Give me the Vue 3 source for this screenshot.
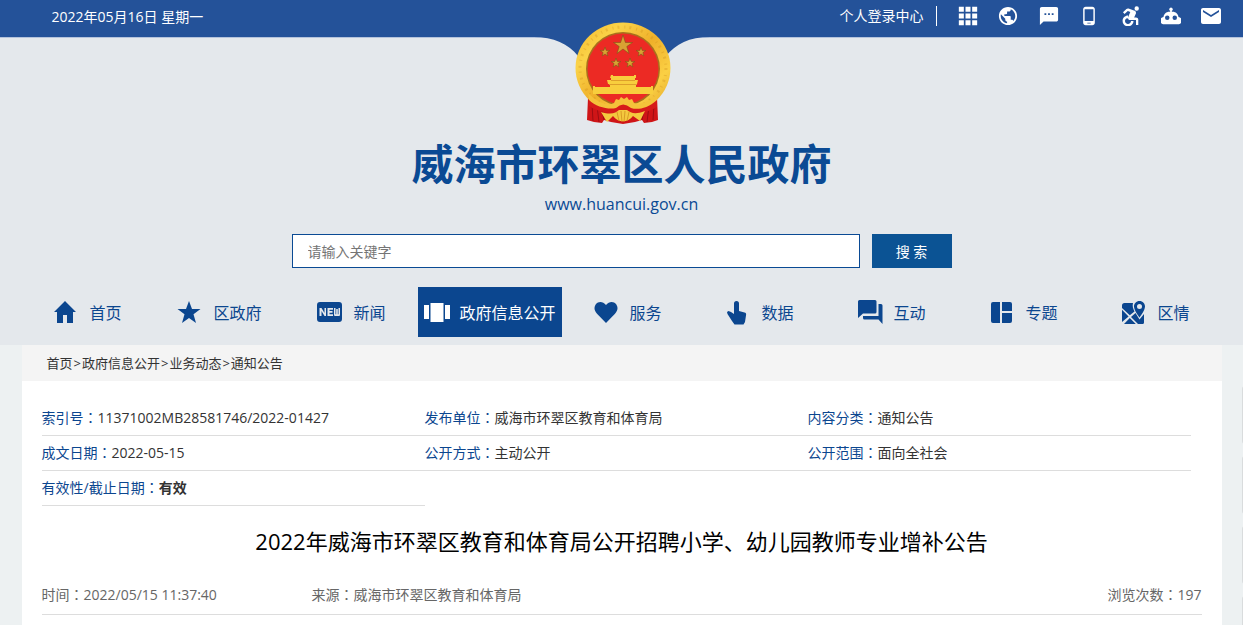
<template>
  <div class="page">
    <header class="site-header">
      <div class="top-bar">
        <div class="wrap top-inner">
          <span class="date">2022年05月16日 星期一</span>
          <a href="#" class="login">个人登录中心</a>
          <div class="top-links">
            <a v-for="item in topLinks" :key="item.name" href="#" :aria-label="item.name">
              <svg :viewBox="item.box || '0 0 24 24'"><path :d="item.path" fill-rule="evenodd" /></svg>
            </a>
          </div>
        </div>
        <svg class="notch" viewBox="0 0 176 30">
          <path d="M0 0C19 0 35 7 44 19L60 30H116L132 19C142 7 155 0 176 0Z" />
        </svg>
        <svg class="emblem" viewBox="0 0 96 104">
          <defs>
            <linearGradient id="gold" x1="0" y1="0" x2="1" y2="1">
              <stop offset="0" stop-color="#f4b62b" />
              <stop offset=".25" stop-color="#fbd348" />
              <stop offset=".5" stop-color="#efb02a" />
              <stop offset=".75" stop-color="#fbd044" />
              <stop offset="1" stop-color="#dfa026" />
            </linearGradient>
          </defs>
          <path d="M13 76L12 98 19 100 27 101 29 98 36 100 48 102 60 100 67 98 69 101 77 100 83 98 82 75Z" fill="#cf1517" />
          <path d="M17 82L18 99M22 84L24 100M74 84L72 100M79 82L78 98M27 88L29 98M69 88L67 98" stroke="#9d0d12" stroke-width="1" />
          <ellipse cx="48" cy="46" rx="47.500" ry="45.500" fill="url(#gold)" />
          <ellipse cx="48" cy="46" rx="43" ry="41" fill="none" stroke="#ca8718" stroke-width="3" stroke-dasharray="2 5 1 4" opacity=".3" />
          <circle cx="48" cy="47" r="37" fill="#a9701c" />
          <circle cx="48" cy="47" r="35.500" fill="#ec2a24" />
          <g fill="#d8a233" stroke="#7d5417" stroke-width=".6">
            <path d="M48 13L50.400 20.500 57.500 20.500 51.800 24.500 54 31.500 48 27 42 31.500 44.200 24.500 38.500 20.500 45.600 20.500Z" />
            <path v-for="star in emblemStars" :key="star" :d="star" />
          </g>
          <path d="M36 53H38V54H59V53H61V56H60V58H63L62 62H61V65H76V64H78V72H18V64H20V65H35V62H33L32 58H36V56H35Z" fill="#f8ce3d" />
          <path d="M36 58.500H60M34 62.500H62" stroke="#dd9f2a" stroke-width="1" />
          <path d="M14 76C25 85 35 87 43 84L48 81 54 84C62 87 73 83 82 75L82 85C72 91 64 92 48 91C34 92 23 90 14 84Z" fill="#d61b1a" />
          <path d="M13 71C24 82 33 84 39 81L41 77 44 78 46 75 49 77 52 75 54 78 57 77 59 81C66 83 75 80 83 71L82 78C72 87 62 88 56 86Q48 79 41 86C34 88 21 85 14 78Z" fill="#f4c23a" />
          <path d="M26 90C36 93 41 91 44 88H52C56 91 60 93 70 89L65 99 58 94C53 101 43 101 38 94L32 100Z" fill="#f4c83e" />
          <path d="M42 90L44 99M46 89L47 100M50 89L49 100M54 90L52 99" stroke="#d18f20" stroke-width=".8" />
        </svg>
      </div>

      <div class="banner">
        <h1>威海市环翠区人民政府</h1>
        <p class="site-url">www.huancui.gov.cn</p>
        <form class="search" @submit.prevent>
          <input v-model="keyword" type="text" placeholder="请输入关键字" aria-label="请输入关键字" />
          <button type="submit">搜 索</button>
        </form>
      </div>

      <nav class="wrap main-nav">
        <div v-for="item in navItems" :key="item.text" class="nav-item">
          <a href="#" :class="{ active: item.active }">
            <svg viewBox="0 0 26 26"><path :d="item.path" fill-rule="evenodd" /></svg>
            <span>{{ item.text }}</span>
          </a>
        </div>
      </nav>
    </header>

    <main class="wrap content">
      <div class="breadcrumb">
        <template v-for="(crumb, index) in crumbs" :key="crumb">
          <span v-if="index">&gt;</span><a href="#">{{ crumb }}</a>
        </template>
      </div>

      <dl class="meta">
        <div v-for="item in meta" :key="item.label">
          <dt>{{ item.label }}<span class="colon">：</span></dt>
          <dd :class="{ strong: item.strong }">{{ item.value }}</dd>
        </div>
      </dl>

      <article>
        <h2>2022年威海市环翠区教育和体育局公开招聘小学、幼儿园教师专业增补公告</h2>
        <div class="info">
          <span class="time">时间<span class="colon">：</span>2022/05/15 11:37:40</span>
          <span>来源<span class="colon">：</span>威海市环翠区教育和体育局</span>
          <span class="views">浏览次数<span class="colon">：</span>197</span>
        </div>
      </article>
    </main>

    <aside class="side-tools">
      <div v-for="n in 4" :key="n"></div>
    </aside>
  </div>
</template>

<script setup>
import { ref } from 'vue';

const keyword = ref('');

const topLinks = [
  { name: '网站群', path: 'M1 1h6v6H1zM9 1h6v6H9zM17 1h6v6h-6zM1 9h6v6H1zM9 9h6v6H9zM17 9h6v6h-6zM1 17h6v6H1zM9 17h6v6H9zM17 17h6v6h-6z' },
  { name: '语言', box: '1 1 22 22', path: 'M12 2C6.480 2 2 6.480 2 12s4.480 10 10 10 10-4.480 10-10S17.520 2 12 2zm-1 17.930c-3.950-.490-7-3.850-7-7.930 0-.620.080-1.210.210-1.790L9 15v1c0 1.100.900 2 2 2v1.930zm6.900-2.540c-.260-.810-1-1.390-1.900-1.390h-1v-3c0-.550-.450-1-1-1H8v-2h2c.550 0 1-.450 1-1V7h2c1.100 0 2-.900 2-2v-.410c2.930 1.190 5 4.060 5 7.410 0 2.080-.800 3.970-2.100 5.390z' },
  { name: '短信', box: '1 1 22 22', path: 'M20 2H4c-1.100 0-1.990.900-1.990 2L2 22l4-4h14c1.100 0 2-.900 2-2V4c0-1.100-.900-2-2-2zM9 11H7V9h2v2zm4 0h-2V9h2v2zm4 0h-2V9h2v2z' },
  { name: '手机版', path: 'M16 1H8C6.340 1 5 2.340 5 4v16c0 1.660 1.340 3 3 3h8c1.660 0 3-1.340 3-3V4c0-1.660-1.340-3-3-3zm-2 20h-4v-1h4v1zm3.250-3H6.750V4h10.500v14z' },
  { name: '无障碍', box: '2 2 20 20', path: 'M16.500 4.500a2.200 2.200 0 1 0 4.400 0a2.200 2.200 0 1 0-4.400 0zM15.500 17H13c0 1.650-1.350 3-3 3s-3-1.350-3-3 1.350-3 3-3v-2.400c-3 0-5.400 2.400-5.400 5.400s2.400 5.400 5.400 5.400 5.500-2.400 5.500-5.400zM18 13.500h-1.860l1.670-3.670C18.420 8.500 17.440 6.600 15.960 6.600L10.500 4.500c-.810-.200-1.540 0-2.100.600L5 8.200l1.500 1.700 3.300-2.800 2.500 1-2.130 5c-.600 1.330.390 2.900 1.850 2.900H18v5h2.300v-5.500c0-1.100-1.200-2-2.300-2z' },
  { name: '智能问答', box: '0 1 24 22', path: 'M11 5.800a2 2 0 1 1 2 0V7h1c3.800 0 6.500 2.700 7 6.200a4.500 4.500 0 0 1 .500 8.800H2.500A4.500 4.500 0 0 1 3 13.200C3.500 9.700 6.200 7 10 7h1zM7.500 11.500a2.700 2.700 0 1 0 0 5.400a2.700 2.700 0 1 0 0-5.400zM16.500 11.500a2.700 2.700 0 1 0 0 5.400a2.700 2.700 0 1 0 0-5.400z' },
  { name: '邮箱', box: '2 2 20 20', path: 'M20 4H4c-1.100 0-2 .900-2 2v12c0 1.100.900 2 2 2h16c1.100 0 2-.900 2-2V6c0-1.100-.900-2-2-2zm0 4l-8 5-8-5V6l8 5 8-5v2z' }
];

const navItems = [
  { text: '首页', path: 'M12 2L1 13h3v11h6v-8h4v8h6V13h3z' },
  { text: '区政府', path: 'M12 2l3 8h8.500l-7 5.300L19 24l-7-5-7 5 2.500-8.700L.5 10H9z' },
  { text: '新闻', path: 'M3 3h19a3 3 0 0 1 3 3v14a3 3 0 0 1-3 3H3a3 3 0 0 1-3-3V6a3 3 0 0 1 3-3zM2.500 9v8h2v-5l3 5H9V9H7.500v5l-3-5zM10.500 9v8H16v-1.800h-3.500v-1.500h3V12h-3v-1.200H16V9zM17 9v6.500c0 1 .500 1.500 1.500 1.500h3c1 0 1.500-.500 1.500-1.500V9h-1.500v6.200h-.700V10H19.200v5.200h-.700V9z' },
  { text: '政府信息公开', active: true, path: 'M0 6h5v14H0zM6.500 4h13v19h-13zM21 6h5v14h-5z' },
  { text: '服务', path: 'M12 24L3 14.800C0 11.500-.200 8 1.800 5.200C4.500 2 9 2.300 12 6c3-3.700 7.500-4 10.200-.800c2 2.800 1.800 6.300-1.200 9.600z' },
  { text: '数据', path: 'M8 4.500a2.500 2.500 0 0 1 5 0V12l5.500 1.500c1.300.400 1.800 1 1.600 2.300L19 23l-1.500 2.500H8.500L6 22 1.500 15l-.500-2 1.500-1L5 13l3 2z' },
  { text: '互动', path: 'M1.500 1H17a1.500 1.500 0 0 1 1.500 1.500V13a1.500 1.500 0 0 1-1.500 1.500H5L0 19V2.500A1.500 1.500 0 0 1 1.500 1zM20.500 5H23a1.500 1.500 0 0 1 1.500 1.500V25l-4-4.500H6.500A1.500 1.500 0 0 1 5 19v-2h15.500z' },
  { text: '专题', path: 'M3 3h7v21H3a2 2 0 0 1-2-2V5a2 2 0 0 1 2-2zM12 3h8a2 2 0 0 1 2 2v7H12zM12 14h10v8a2 2 0 0 1-2 2h-8z' },
  { text: '区情', path: 'M17.500 2c3.300 0 5.500 2.500 5.500 5.500 0 4-5.500 11-5.500 11S12 11.500 12 7.500C12 4.500 14.200 2 17.500 2zm0 3a2.500 2.500 0 1 0 0 5a2.500 2.500 0 1 0 0-5zM2.500 4H11c-.800 3 0 5.500 1.500 8.500L7.800 16.300 0 9V6.500A2.500 2.500 0 0 1 2.500 4zM0 10.800l6.600 6.600L0 23zM2 25l5.800-6 6 6zM13.500 14l4 6.500L22 15v8.500c0 .800-.500 1.500-1.500 1.500h-4.500l-7-7z' }
];

// Малые звёзды герба
const starCenters = [[30, 30], [66, 30], [41, 41], [55, 41]];
const emblemStars = starCenters.map(([x, y]) => {
  const points = [];
  for (let i = 0; i < 10; i++) {
    const r = i % 2 ? 2 : 5;
    const a = (Math.PI * i) / 5 - Math.PI / 2;
    points.push(`${(x + r * Math.cos(a)).toFixed(1)} ${(y + r * Math.sin(a)).toFixed(1)}`);
  }
  return `M${points.join('L')}Z`;
});

const crumbs = ['首页', '政府信息公开', '业务动态', '通知公告'];

const meta = [
  { label: '索引号', value: '11371002MB28581746/2022-01427' },
  { label: '发布单位', value: '威海市环翠区教育和体育局' },
  { label: '内容分类', value: '通知公告' },
  { label: '成文日期', value: '2022-05-15' },
  { label: '公开方式', value: '主动公开' },
  { label: '公开范围', value: '面向全社会' },
  { label: '有效性/截止日期', value: '有效', strong: true }
];
</script>

<style>
body {
  background: #edf1f2;
}
</style>

<style scoped>
.page {
  display: flex;
  flex-direction: column;
  min-height: 100vh;
  font-family: "Open Sans", "Noto Sans CJK SC", sans-serif;
  font-size: 14px;
  color: #333;
}

.page a {
  color: inherit;
  text-decoration: none;
}

.wrap {
  width: 100%;
  max-width: 1200px;
  margin: 0 auto;
}

.site-header {
  background: #e4e8ec;
  padding-bottom: 8px;
}

.top-bar {
  position: relative;
  height: 37px;
  background: #245299;
  border-bottom: 1px solid #b4c3dc;
  color: #fff;
}

.top-inner {
  display: flex;
  align-items: center;
  height: 32px;
}

.date {
  margin-left: 30px;
}

.login {
  margin-left: auto;
  padding-right: 12px;
  line-height: 20px;
  border-right: 1px solid #fff;
}

.top-links {
  display: flex;
  justify-content: space-between;
  width: 264px;
  margin-left: 21px;
}

.top-links a,
.top-links svg {
  display: block;
  width: 20px;
  height: 20px;
}

.top-links svg {
  fill: #fff;
}

.notch {
  position: absolute;
  top: 37px;
  left: 50%;
  width: 176px;
  height: 30px;
  margin-left: -88px;
  fill: #245299;
}

.emblem {
  position: absolute;
  top: 22px;
  left: 50%;
  width: 96px;
  height: 104px;
  margin-left: -47px;
}

.banner {
  padding: 96px 20px 0;
  text-align: center;
  color: #0a4a94;
}

h1 {
  margin: 0;
  font-size: 42px;
  line-height: 60px;
}

.site-url {
  margin: 0;
  font-size: 16px;
  line-height: 20px;
}

.search {
  display: flex;
  justify-content: center;
  gap: 12px;
  max-width: 660px;
  height: 34px;
  margin: 20px auto 19px;
}

.search input {
  flex: 1;
  min-width: 0;
  box-sizing: border-box;
  padding: 0 15px;
  border: 1px solid #0a4a94;
  background: #fff;
  font: inherit;
  font-size: 14px;
  outline: none;
}

.search input::placeholder {
  color: #757575;
}

.search button {
  width: 80px;
  padding: 0;
  border: none;
  background: #0b5394;
  color: #fff;
  font: inherit;
  font-size: 14px;
  cursor: pointer;
}

.main-nav {
  display: flex;
}

.nav-item {
  flex: 1 1 0;
  display: flex;
  justify-content: center;
}

.nav-item a {
  display: flex;
  flex-shrink: 0;
  align-items: center;
  gap: 10px;
  height: 50px;
  padding: 0 6px;
  font-size: 16px;
  white-space: nowrap;
  color: #0b468f;
}

.nav-item a.active {
  background: #0b468f;
  color: #fff;
}

.nav-item svg {
  width: 26px;
  height: 26px;
  fill: currentColor;
}

.content {
  flex: 1;
  background: #fff;
}

.breadcrumb {
  display: flex;
  height: 36px;
  padding-left: 25px;
  background: #f4f4f4;
  font-size: 13px;
  line-height: 36px;
}

.breadcrumb span {
  padding: 0 1px;
}

.meta {
  display: grid;
  grid-template-columns: repeat(3, 1fr);
  margin: 20px 31px 0 20px;
}

.meta div {
  display: flex;
  line-height: 34px;
  border-bottom: 1px solid #ddd;
}

.meta dt {
  color: #0b468f;
}

.meta dd {
  margin: 0;
}

.strong {
  font-weight: bold;
}

.colon {
  font-family: "Noto Sans CJK TC", sans-serif;
  line-height: 1;
}

article {
  padding: 15px 20px 10px;
}

h2 {
  margin: 0;
  font-size: 22px;
  font-weight: 400;
  line-height: 40px;
  text-align: center;
  color: #000;
}

.info {
  display: flex;
  margin-top: 14px;
  line-height: 39px;
  color: #666;
  border-bottom: 1px solid #ddd;
}

.time {
  width: 270px;
}

.views {
  margin-left: auto;
}

.side-tools {
  position: fixed;
  top: 386px;
  right: -59px;
}

.side-tools div {
  width: 60px;
  height: 58px;
  margin-bottom: 12px;
  border-radius: 3px;
  background: #d9dcdd;
}
</style>
